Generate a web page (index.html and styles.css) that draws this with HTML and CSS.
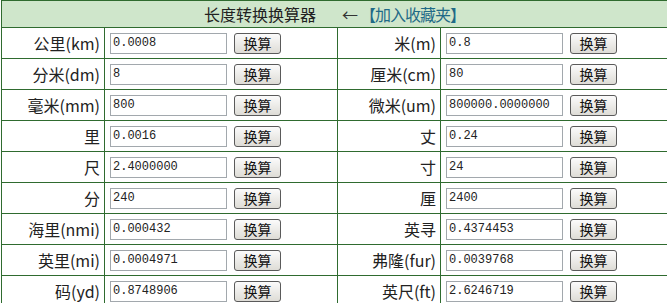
FILE: index.html
```html
<!DOCTYPE html>
<html lang="zh-CN">
<head>
    <meta charset="UTF-8">
    <title>长度转换换算器</title>
    <link rel="stylesheet" href="styles.css">
</head>
<body>
    <table class="converter">
        <colgroup>
            <col class="col-label">
            <col class="col-value">
            <col class="col-label">
            <col class="col-value">
        </colgroup>
        <tr>
            <th colspan="4" class="title">
                长度转换换算器<span class="fav"><span class="arrow">←</span><a href="#">【加入收藏夹】</a></span>
            </th>
        </tr>
        <tr>
            <td class="label">公里(km)</td>
            <td><div class="field"><input type="text" value="0.0008"><button>换算</button></div></td>
            <td class="label">米(m)</td>
            <td><div class="field"><input type="text" value="0.8"><button>换算</button></div></td>
        </tr>
        <tr>
            <td class="label">分米(dm)</td>
            <td><div class="field"><input type="text" value="8"><button>换算</button></div></td>
            <td class="label">厘米(cm)</td>
            <td><div class="field"><input type="text" value="80"><button>换算</button></div></td>
        </tr>
        <tr>
            <td class="label">毫米(mm)</td>
            <td><div class="field"><input type="text" value="800"><button>换算</button></div></td>
            <td class="label">微米(um)</td>
            <td><div class="field"><input type="text" value="800000.0000000"><button>换算</button></div></td>
        </tr>
        <tr>
            <td class="label">里</td>
            <td><div class="field"><input type="text" value="0.0016"><button>换算</button></div></td>
            <td class="label">丈</td>
            <td><div class="field"><input type="text" value="0.24"><button>换算</button></div></td>
        </tr>
        <tr>
            <td class="label">尺</td>
            <td><div class="field"><input type="text" value="2.4000000"><button>换算</button></div></td>
            <td class="label">寸</td>
            <td><div class="field"><input type="text" value="24"><button>换算</button></div></td>
        </tr>
        <tr>
            <td class="label">分</td>
            <td><div class="field"><input type="text" value="240"><button>换算</button></div></td>
            <td class="label">厘</td>
            <td><div class="field"><input type="text" value="2400"><button>换算</button></div></td>
        </tr>
        <tr>
            <td class="label">海里(nmi)</td>
            <td><div class="field"><input type="text" value="0.000432"><button>换算</button></div></td>
            <td class="label">英寻</td>
            <td><div class="field"><input type="text" value="0.4374453"><button>换算</button></div></td>
        </tr>
        <tr>
            <td class="label">英里(mi)</td>
            <td><div class="field"><input type="text" value="0.0004971"><button>换算</button></div></td>
            <td class="label">弗隆(fur)</td>
            <td><div class="field"><input type="text" value="0.0039768"><button>换算</button></div></td>
        </tr>
        <tr>
            <td class="label">码(yd)</td>
            <td><div class="field"><input type="text" value="0.8748906"><button>换算</button></div></td>
            <td class="label">英尺(ft)</td>
            <td><div class="field"><input type="text" value="2.6246719"><button>换算</button></div></td>
        </tr>
    </table>
</body>
</html>
```

FILE: styles.css
```css
html, body {
    margin: 0;
    padding: 0;
    overflow: hidden;
    background: #ffffff;
}
body {
    font-family: "Noto Sans CJK SC", "Noto Sans", sans-serif;
    color: #222;
}
.converter {
    border-collapse: collapse;
    table-layout: fixed;
    width: 672px;
    margin-left: 1px;
}
.col-label {
    width: 103px;
}
.col-value {
    width: 233px;
}
.converter th,
.converter td {
    border: 1px solid #2f6b2f;
    padding: 0;
    height: 30px;
    vertical-align: middle;
}
.title {
    height: 26px !important;
    background-color: #cfe6cb;
    font-size: 16px;
    font-weight: normal;
    text-align: center;
    line-height: 18px;
    padding-right: 6px !important;
}
.fav {
    margin-left: 26px;
}
.arrow {
    color: #333;
    margin-right: 2px;
}
.fav a {
    color: #1f6a87;
    text-decoration: none;
    letter-spacing: -1px;
}
.label {
    text-align: right;
    padding-right: 4px !important;
    font-size: 16px;
    line-height: 18px;
}
.field {
    display: flex;
    align-items: center;
    gap: 7px;
    padding-left: 5px;
    height: 30px;
}
.field input {
    box-sizing: border-box;
    width: 117px;
    height: 21px;
    margin: 0;
    padding: 0 2px;
    border: 1px solid #a2a8ad;
    font-family: "Liberation Mono", monospace;
    font-size: 12px;
    color: #222;
}
.field button {
    box-sizing: border-box;
    width: 47px;
    height: 21px;
    margin: 0;
    padding: 0;
    border: 1px solid #5a5a5a;
    border-radius: 3px;
    background: linear-gradient(#fbfbfb, #dedcd6);
    font-family: "Noto Sans CJK SC", sans-serif;
    font-size: 14px;
    line-height: 18px;
    color: #111;
}
```
